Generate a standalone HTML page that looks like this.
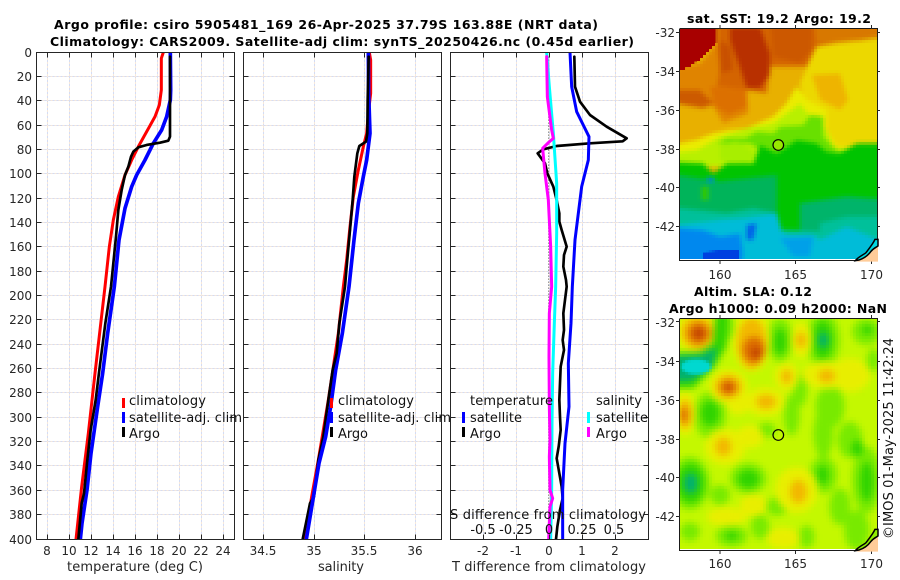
<!DOCTYPE html>
<html><head><meta charset="utf-8">
<style>
html,body{margin:0;padding:0;background:#fff}
svg{display:block}
text{font-family:"DejaVu Sans","Liberation Sans",sans-serif;font-size:12px;fill:#262626}
.t{font-weight:bold;fill:#000;font-size:12.5px}
.k{fill:#111}
.l{font-size:13px}
</style></head><body>
<svg width="900" height="580" viewBox="0 0 900 580" xmlns="http://www.w3.org/2000/svg">
<defs>
<filter id="pix" filterUnits="userSpaceOnUse" x="680" y="29" width="198" height="231" color-interpolation-filters="sRGB">
<feFlood x="680" y="29" width="1" height="1" flood-color="#000"/>
<feComposite x="680" y="29" width="3" height="3"/>
<feTile x="680" y="29" width="198" height="231" result="a"/>
<feComposite in="SourceGraphic" in2="a" operator="in"/>
<feMorphology operator="dilate" radius="1"/>
</filter>
<filter id="pix2" filterUnits="userSpaceOnUse" x="680" y="319" width="198" height="231" color-interpolation-filters="sRGB">
<feFlood x="680" y="319" width="1" height="1" flood-color="#000"/>
<feComposite x="680" y="319" width="3" height="3"/>
<feTile x="680" y="319" width="198" height="231" result="a"/>
<feComposite in="SourceGraphic" in2="a" operator="in"/>
<feMorphology operator="dilate" radius="1"/>
</filter>
<filter id="b" x="-20%" y="-20%" width="140%" height="140%" color-interpolation-filters="sRGB"><feGaussianBlur stdDeviation="10"/></filter>
<filter id="b1" x="-20%" y="-20%" width="140%" height="140%" color-interpolation-filters="sRGB"><feGaussianBlur stdDeviation="6"/></filter>
<filter id="b2" x="-20%" y="-20%" width="140%" height="140%" color-interpolation-filters="sRGB"><feGaussianBlur stdDeviation="4"/></filter>
<clipPath id="c1"><rect x="680" y="29" width="197" height="230"/></clipPath>
<clipPath id="c2"><rect x="680" y="319" width="197" height="230"/></clipPath>
<clipPath id="pc1"><rect x="37" y="52" width="197" height="487"/></clipPath>
<clipPath id="pc2"><rect x="244" y="52" width="197" height="487"/></clipPath>
<clipPath id="pc3"><rect x="451" y="52" width="197" height="487"/></clipPath>
<path id="hgrid" d="M0 76.5H198M0 100.5H198M0 125.5H198M0 149.5H198M0 173.5H198M0 198.5H198M0 222.5H198M0 246.5H198M0 271.5H198M0 295.5H198M0 319.5H198M0 344.5H198M0 368.5H198M0 392.5H198M0 417.5H198M0 441.5H198M0 465.5H198M0 490.5H198M0 514.5H198"/>
<path id="hticks" d="M0 76.5H5M0 100.5H5M0 125.5H5M0 149.5H5M0 173.5H5M0 198.5H5M0 222.5H5M0 246.5H5M0 271.5H5M0 295.5H5M0 319.5H5M0 344.5H5M0 368.5H5M0 392.5H5M0 417.5H5M0 441.5H5M0 465.5H5M0 490.5H5M0 514.5H5M198 76.5H193M198 100.5H193M198 125.5H193M198 149.5H193M198 173.5H193M198 198.5H193M198 222.5H193M198 246.5H193M198 271.5H193M198 295.5H193M198 319.5H193M198 344.5H193M198 368.5H193M198 392.5H193M198 417.5H193M198 441.5H193M198 465.5H193M198 490.5H193M198 514.5H193"/>
</defs>
<rect width="900" height="580" fill="#fff"/>

<text class="t" x="54" y="29" textLength="544" lengthAdjust="spacing">Argo profile: csiro 5905481_169 26-Apr-2025 37.79S 163.88E (NRT data)</text>
<text class="t" x="50" y="46" textLength="584" lengthAdjust="spacing">Climatology: CARS2009. Satellite-adj clim: synTS_20250426.nc (0.45d earlier)</text>

<!-- grids -->
<g fill="none" stroke-width="1">
<g stroke="#d4dcf4" stroke-dasharray="2 2">
<use href="#hgrid" x="36.5"/><use href="#hgrid" x="243.5"/><use href="#hgrid" x="450.5"/>
<path d="M47.500 52V539M69.500 52V539M91.500 52V539M113.500 52V539M135.500 52V539M157.500 52V539M179.500 52V539M201.500 52V539M223.500 52V539M263.500 52V539M314.500 52V539M364.500 52V539M415.500 52V539M483.500 52V539M516.500 52V539M549.500 52V539M582.500 52V539M615.500 52V539"/>
</g>
<g stroke="#f6e8da" stroke-dasharray="2 2" stroke-dashoffset="2">
<use href="#hgrid" x="36.500"/><use href="#hgrid" x="243.500"/><use href="#hgrid" x="450.500"/>
<path d="M47.500 52V539M69.500 52V539M91.500 52V539M113.500 52V539M135.500 52V539M157.500 52V539M179.500 52V539M201.500 52V539M223.500 52V539M263.500 52V539M314.500 52V539M364.500 52V539M415.500 52V539M483.500 52V539M516.500 52V539M549.500 52V539M582.500 52V539M615.500 52V539"/>
</g>
</g>

<!-- profile curves -->
<g fill="none" stroke-linejoin="round" stroke-linecap="round">
<g clip-path="url(#pc1)"><g transform="scale(.33333)">
<polyline stroke="#f00" stroke-width="9" points="490,157 484,175 484,270 478,315 465,350 440,395 415,440 395,480 375,525 355,590 340,660 328,740 315,860 300,990 285,1120 265,1300 245,1460 228,1618"/>
<polyline stroke="#00f" stroke-width="11" points="511,157 512,270 511,300 500,350 485,390 460,430 435,480 410,525 395,560 375,625 357,720 343,860 323,1000 308,1120 293,1220 273,1360 261,1470 246,1570 241,1618"/>
<polyline stroke="#000" stroke-width="8" points="510,170 510,410 505,422 480,428 440,435 415,442 400,455 393,470 385,500 375,525 365,570 355,630 348,710 342,770 333,860 316,970 298,1110 287,1200 272,1290 262,1380 252,1480 245,1510 235,1618"/>
</g></g>
<g clip-path="url(#pc2)"><g transform="scale(.33333)">
<polyline stroke="#f00" stroke-width="9" points="1108,157 1112,180 1112,280 1105,340 1100,400 1090,440 1075,510 1060,590 1050,680 1040,780 1030,860 1015,1000 1000,1100 985,1200 970,1290 955,1380 935,1490 915,1618"/>
<polyline stroke="#00f" stroke-width="11" points="1105,157 1106,280 1110,400 1100,480 1090,530 1075,610 1062,720 1047,860 1027,1000 1007,1110 992,1220"/>
<polyline stroke="#000" stroke-width="8" points="1106,170 1103,300 1102,400 1098,425 1078,438 1072,460 1063,530 1058,600 1050,690 1040,800 1035,860 1018,970 1010,1060 998,1110 985,1200 970,1310 955,1380 942,1490 930,1510 908,1618"/>
<polyline stroke="#00f" stroke-width="11" points="992,1220 977,1310 957,1390 937,1510 919,1618"/>
</g></g>
<g clip-path="url(#pc3)"><g transform="translate(440,0) scale(.33333)">
<path d="M326 170V1618" stroke="#444" stroke-width="3" stroke-dasharray="3 6" stroke-linecap="butt"/>
<polyline stroke="#000" stroke-width="8" points="403,170 405,260 420,305 450,345 500,380 560,415 548,424 450,430 350,438 310,448 293,460 315,490 322,520 340,560 350,600 358,640 358,665 365,690 380,740 372,765 370,800 378,840 380,860 375,900 370,940 372,990 368,1020 372,1050 362,1100 360,1150 358,1200 360,1250 362,1290 356,1340 350,1375 358,1420 365,1460 368,1495 360,1530 352,1580 348,1618"/>
<polyline stroke="#00f" stroke-width="9" points="390,157 395,260 410,335 447,410 445,480 425,560 405,720 397,860 393,970 385,1090 387,1220 375,1330 368,1470 368,1618"/>
<polyline stroke="#0ff" stroke-width="9" points="320,157 328,260 340,400 350,550 350,700 347,860 343,970 338,1120 336,1270 335,1470 332,1618"/>
<polyline stroke="#f0f" stroke-width="9" points="320,170 322,290 335,390 340,415 325,428 308,445 315,520 325,600 332,740 335,860 328,940 327,1070 328,1220 330,1320 328,1370 330,1470 338,1495 330,1520 326,1618"/>
</g></g>
</g>

<!-- axes boxes and ticks -->
<g fill="none" stroke="#262626" stroke-width="1">
<rect x="36.500" y="52.500" width="198" height="487"/>
<rect x="243.500" y="52.500" width="198" height="487"/>
<rect x="450.500" y="52.500" width="198" height="487"/>
<use href="#hticks" x="36.500"/><use href="#hticks" x="243.500"/><use href="#hticks" x="450.500"/>
<path d="M47.500 52.500v5M69.500 52.500v5M91.500 52.500v5M113.500 52.500v5M135.500 52.500v5M157.500 52.500v5M179.500 52.500v5M201.500 52.500v5M223.500 52.500v5M263.500 52.500v5M314.500 52.500v5M364.500 52.500v5M415.500 52.500v5M483.500 52.500v5M516.500 52.500v5M549.500 52.500v5M582.500 52.500v5M615.500 52.500v5M47.500 539.500v-5M69.500 539.500v-5M91.500 539.500v-5M113.500 539.500v-5M135.500 539.500v-5M157.500 539.500v-5M179.500 539.500v-5M201.500 539.500v-5M223.500 539.500v-5M263.500 539.500v-5M314.500 539.500v-5M364.500 539.500v-5M415.500 539.500v-5M483.500 539.500v-5M516.500 539.500v-5M549.500 539.500v-5M582.500 539.500v-5M615.500 539.500v-5"/>
</g>

<!-- depth labels -->
<g>
<text x="32" y="57" text-anchor="end">0</text>
<text x="32" y="81" text-anchor="end">20</text>
<text x="32" y="105" text-anchor="end">40</text>
<text x="32" y="130" text-anchor="end">60</text>
<text x="32" y="154" text-anchor="end">80</text>
<text x="32" y="178" text-anchor="end">100</text>
<text x="32" y="203" text-anchor="end">120</text>
<text x="32" y="227" text-anchor="end">140</text>
<text x="32" y="251" text-anchor="end">160</text>
<text x="32" y="276" text-anchor="end">180</text>
<text x="32" y="300" text-anchor="end">200</text>
<text x="32" y="324" text-anchor="end">220</text>
<text x="32" y="349" text-anchor="end">240</text>
<text x="32" y="373" text-anchor="end">260</text>
<text x="32" y="397" text-anchor="end">280</text>
<text x="32" y="422" text-anchor="end">300</text>
<text x="32" y="446" text-anchor="end">320</text>
<text x="32" y="470" text-anchor="end">340</text>
<text x="32" y="495" text-anchor="end">360</text>
<text x="32" y="519" text-anchor="end">380</text>
<text x="32" y="544" text-anchor="end">400</text>
</g>

<!-- x labels -->
<g text-anchor="middle">
<text x="47" y="555">8</text><text x="69" y="555">10</text><text x="91" y="555">12</text><text x="113" y="555">14</text><text x="135" y="555">16</text><text x="157" y="555">18</text><text x="179" y="555">20</text><text x="201" y="555">22</text><text x="223" y="555">24</text>
<text x="263" y="555">34.5</text><text x="314" y="555">35</text><text x="364" y="555">35.5</text><text x="415" y="555">36</text>
<text x="483" y="555">-2</text><text x="516" y="555">-1</text><text x="549" y="555">0</text><text x="582" y="555">1</text><text x="615" y="555">2</text>
<text x="483" y="534" class="k l">-0.5</text><text x="516" y="534" class="k l">-0.25</text><text x="549" y="534" class="k l">0</text><text x="582" y="534" class="k l">0.25</text><text x="614" y="534" class="k l">0.5</text>
</g>
<text class="l" x="67" y="571" textLength="136" lengthAdjust="spacing">temperature (deg C)</text>
<text class="l" x="318" y="571" textLength="46" lengthAdjust="spacing">salinity</text>
<text class="l" x="452" y="571" textLength="194" lengthAdjust="spacing">T difference from climatology</text>
<text x="450" y="519" textLength="196" lengthAdjust="spacing" class="k l">S difference from climatology</text>

<!-- legends -->
<g>
<rect x="122" y="398" width="3" height="10" fill="#f00"/><rect x="122" y="412" width="3" height="11" fill="#00f"/><rect x="122" y="427" width="3" height="10" fill="#000"/>
<text class="k l" x="129" y="405" textLength="77" lengthAdjust="spacing">climatology</text>
<text class="k l" x="129" y="422" textLength="113" lengthAdjust="spacing">satellite-adj. clim</text>
<text class="k l" x="129" y="438" textLength="31" lengthAdjust="spacing">Argo</text>
<rect x="330" y="398" width="3" height="10" fill="#f00"/><rect x="330" y="412" width="3" height="11" fill="#00f"/><rect x="330" y="427" width="3" height="10" fill="#000"/>
<text class="k l" x="338" y="405" textLength="76" lengthAdjust="spacing">climatology</text>
<text class="k l" x="338" y="422" textLength="113" lengthAdjust="spacing">satellite-adj. clim</text>
<text class="k l" x="338" y="438" textLength="30" lengthAdjust="spacing">Argo</text>
<rect x="462" y="412" width="3" height="11" fill="#00f"/><rect x="462" y="427" width="3" height="10" fill="#000"/>
<text class="k l" x="470" y="405" textLength="83" lengthAdjust="spacing">temperature</text>
<text class="k l" x="470" y="422" textLength="52" lengthAdjust="spacing">satellite</text>
<text class="k l" x="470" y="438" textLength="31" lengthAdjust="spacing">Argo</text>
<rect x="587" y="412" width="3" height="11" fill="#0ff"/><rect x="587" y="427" width="3" height="10" fill="#f0f"/>
<text class="k l" x="596" y="405" textLength="46" lengthAdjust="spacing">salinity</text>
<text class="k l" x="596" y="422" textLength="52" lengthAdjust="spacing">satellite</text>
<text class="k l" x="596" y="438" textLength="31" lengthAdjust="spacing">Argo</text>
</g>

<!-- MAP 1 -->
<text class="t" x="687" y="23" textLength="184" lengthAdjust="spacing">sat. SST: 19.2 Argo: 19.2</text>
<g clip-path="url(#c1)"><g filter="url(#pix)"><g transform="translate(660,0) scale(.33333)">
<rect x="20" y="50" width="670" height="770" fill="#e8b000"/>
<g filter="url(#b1)">
<polygon points="170,50 680,50 680,130 560,120 470,140 440,200 330,200 320,280 260,270 170,260" fill="#d46400"/>
<polygon points="20,210 120,190 170,130 180,210 170,260 260,270 265,340 190,370 160,320 20,300" fill="#e08400"/>
<polygon points="470,140 680,110 680,440 480,440 430,300 420,250" fill="#ecd800"/>
<polygon points="455,225 540,220 565,300 540,330 480,300" fill="#eeb400"/>
<polygon points="330,50 460,50 455,150 420,190 340,170" fill="#cc5800"/>
<polygon points="460,50 680,50 680,108 560,125 470,130" fill="#d87800"/>
<polygon points="210,80 300,80 330,160 330,225 300,265 260,265 235,190 210,120" fill="#b83000"/>
<polygon points="20,270 120,270 160,310 130,325 20,305" fill="#cc5a00"/>
<polygon points="180,120 210,140 220,210 180,220" fill="#c85000"/>
<polygon points="150,260 260,270 262,320 205,345 165,320" fill="#dc7000"/>
<polygon points="20,440 110,420 160,400 210,390 260,385 340,350 380,310 410,260 440,300 500,330 500,390 530,440 680,440 680,500 20,500" fill="#eaec00"/>
<polygon points="20,460 110,450 180,410 260,385 340,370 380,340 420,310 450,350 500,390 520,440 680,480 680,500 20,500" fill="#b8f000"/>
<polygon points="170,430 200,415 255,415 290,395 340,400 360,380 430,375 450,345 490,350 490,410 530,450 560,470 330,480 300,450 270,430" fill="#68e000"/>
<polygon points="180,435 230,425 275,450 285,470 260,490 180,480" fill="#a8ee00"/>
<polygon points="20,485 130,490 160,520 200,490 280,490 300,435 350,460 410,420 470,430 500,455 535,460 590,430 680,430 680,820 20,820" fill="#00c400"/>
<polygon points="20,520 180,545 350,525 350,650 20,660" fill="#00b45a"/>
<polygon points="420,610 560,590 680,600 680,680 420,700" fill="#00b46a"/>
<polygon points="125,560 145,560 145,600 125,600" fill="#30c800"/>
<polygon points="20,620 200,640 280,625 350,640 360,690 480,695 480,670 560,650 680,650 680,820 20,820" fill="#00c09a"/>
<polygon points="180,660 250,655 350,640 365,695 380,705 460,705 480,720 560,680 680,730 680,820 20,820 20,680" fill="#00bcd8"/>
<polygon points="20,680 130,690 180,710 240,700 250,760 240,820 20,820" fill="#0088ee"/>
<polygon points="260,675 290,670 280,720 260,720" fill="#0060e8"/>
<polygon points="360,715 460,710 450,770 400,770" fill="#00a0e8"/>
<rect x="142" y="533" width="20" height="12" fill="#0080f0"/>
</g>
<polygon points="130,755 240,750 240,820 130,820" fill="#0040e0"/>
<polygon points="20,50 170,50 170,130 120,180 70,210 20,210" fill="#a80000"/>
</g></g></g>
<ellipse cx="778.300" cy="145" rx="5.300" ry="5.600" fill="#98e800"/>
<circle cx="778.300" cy="145" r="5.300" fill="none" stroke="#000" stroke-width="1.200"/>

<path d="M679.500 29V261M679.500 260.500H878M877.500 29V261M679.500 28.500H878" fill="none" stroke="#1a1a1a" stroke-width="1"/>
<path d="M676 32.500h4M676 71.500h4M676 110.500h4M676 149.500h4M676 187.500h4M676 226.500h4M877 32.500h3M877 71.500h3M877 110.500h3M877 149.500h3M877 187.500h3M877 226.500h3M720 25v4M795.500 25v4M871.500 25v4M720 261v3M795.500 261v3M871.500 261v3" fill="none" stroke="#262626"/>
<g transform="translate(660,0) scale(.33333)">
<polygon points="595,782 625,765 645,745 654,738 654,785 590,785" fill="#ffcc99"/>
<path d="M597,780 C615,774 625,765 632,755 C640,745 648,742 654,738 L654,718 L645,718 C640,730 628,745 618,758 C610,765 595,770 586,782Z" fill="#00d8e0" stroke="#000" stroke-width="4.500"/>
</g>
<g>
<text x="675" y="37" text-anchor="end">-32</text><text x="675" y="76" text-anchor="end">-34</text><text x="675" y="115" text-anchor="end">-36</text><text x="675" y="154" text-anchor="end">-38</text><text x="675" y="192" text-anchor="end">-40</text><text x="675" y="231" text-anchor="end">-42</text>
</g>
<text text-anchor="middle" x="720" y="279">160</text><text text-anchor="middle" x="795.500" y="279">165</text><text text-anchor="middle" x="871.500" y="279">170</text>

<!-- MAP 2 -->
<text class="t" x="694" y="296" textLength="118" lengthAdjust="spacing">Altim. SLA: 0.12</text>
<text class="t" x="669" y="313" textLength="218" lengthAdjust="spacing">Argo h1000: 0.09 h2000: NaN</text>
<g clip-path="url(#c2)"><g filter="url(#pix2)"><g transform="translate(660,290) scale(.33333)">
<rect x="20" y="50" width="670" height="770" fill="#c4f800"/>
<g filter="url(#b)">
<g fill="#78ea00">
<ellipse cx="190" cy="110" rx="34" ry="45"/><ellipse cx="360" cy="150" rx="38" ry="66"/><ellipse cx="490" cy="150" rx="50" ry="85"/><ellipse cx="620" cy="125" rx="44" ry="40"/><ellipse cx="640" cy="210" rx="20" ry="34"/>
<ellipse cx="150" cy="375" rx="48" ry="70"/><ellipse cx="420" cy="300" rx="22" ry="50"/><ellipse cx="395" cy="375" rx="24" ry="62"/><ellipse cx="510" cy="350" rx="44" ry="65"/><ellipse cx="490" cy="430" rx="30" ry="75"/>
<ellipse cx="320" cy="420" rx="28" ry="22"/><ellipse cx="570" cy="450" rx="38" ry="55"/><ellipse cx="620" cy="570" rx="44" ry="100"/><ellipse cx="490" cy="555" rx="42" ry="55"/><ellipse cx="265" cy="565" rx="55" ry="46"/>
<ellipse cx="90" cy="580" rx="60" ry="80"/><ellipse cx="180" cy="615" rx="30" ry="30"/><ellipse cx="350" cy="650" rx="32" ry="28"/><ellipse cx="215" cy="738" rx="48" ry="32"/><ellipse cx="300" cy="710" rx="28" ry="38"/>
<ellipse cx="90" cy="725" rx="30" ry="28"/><ellipse cx="590" cy="720" rx="38" ry="60"/><ellipse cx="440" cy="740" rx="24" ry="34"/><ellipse cx="540" cy="650" rx="32" ry="55"/>
</g>
<g fill="#e8ee00">
<ellipse cx="115" cy="125" rx="66" ry="64"/><ellipse cx="275" cy="150" rx="56" ry="95"/><ellipse cx="425" cy="150" rx="32" ry="52"/><ellipse cx="380" cy="260" rx="36" ry="42"/><ellipse cx="500" cy="255" rx="74" ry="42"/>
<ellipse cx="205" cy="290" rx="58" ry="52"/><ellipse cx="315" cy="335" rx="62" ry="42"/><ellipse cx="235" cy="340" rx="34" ry="34"/><ellipse cx="75" cy="370" rx="32" ry="66"/><ellipse cx="195" cy="470" rx="60" ry="55"/>
<ellipse cx="270" cy="440" rx="40" ry="34"/><ellipse cx="410" cy="600" rx="64" ry="68"/><ellipse cx="200" cy="680" rx="60" ry="28"/><ellipse cx="370" cy="745" rx="50" ry="32"/><ellipse cx="280" cy="645" rx="40" ry="34"/><ellipse cx="570" cy="255" rx="60" ry="50"/>
</g>
<g fill="#f2b800">
<ellipse cx="112" cy="128" rx="48" ry="48"/><ellipse cx="275" cy="160" rx="44" ry="76"/><ellipse cx="423" cy="150" rx="16" ry="24"/><ellipse cx="380" cy="260" rx="16" ry="22"/><ellipse cx="500" cy="258" rx="26" ry="20"/>
<ellipse cx="205" cy="290" rx="40" ry="36"/><ellipse cx="318" cy="335" rx="30" ry="22"/><ellipse cx="75" cy="372" rx="22" ry="44"/><ellipse cx="190" cy="470" rx="24" ry="28"/><ellipse cx="415" cy="605" rx="26" ry="36"/>
</g>
<g fill="#dc6c00">
<ellipse cx="115" cy="130" rx="32" ry="32"/><ellipse cx="282" cy="180" rx="34" ry="40"/><ellipse cx="205" cy="292" rx="25" ry="22"/><ellipse cx="72" cy="375" rx="11" ry="24"/>
</g>
<g fill="#c04000"><ellipse cx="116" cy="130" rx="16" ry="16"/><ellipse cx="288" cy="188" rx="14" ry="16"/><ellipse cx="205" cy="292" rx="10" ry="8"/></g>
<g fill="#30d400">
<ellipse cx="360" cy="155" rx="20" ry="40"/><ellipse cx="488" cy="150" rx="30" ry="58"/><ellipse cx="150" cy="370" rx="28" ry="38"/><ellipse cx="265" cy="567" rx="32" ry="28"/><ellipse cx="488" cy="555" rx="18" ry="30"/>
<ellipse cx="620" cy="575" rx="20" ry="60"/><ellipse cx="592" cy="475" rx="18" ry="25"/><ellipse cx="215" cy="738" rx="20" ry="12"/><ellipse cx="622" cy="120" rx="16" ry="14"/>
<ellipse cx="92" cy="580" rx="42" ry="60"/>
<polygon points="168,50 205,50 200,170 165,230 100,295 20,295 20,190 120,185 158,160"/>
</g>
<g fill="#00b070"><ellipse cx="490" cy="150" rx="14" ry="24"/><ellipse cx="92" cy="580" rx="20" ry="30"/><polygon points="20,200 125,195 172,170 155,228 95,272 20,275"/></g>
</g>
<g filter="url(#b2)"><ellipse cx="108" cy="230" rx="44" ry="22" fill="#00d8d0"/></g>
</g></g></g>
<circle cx="778.300" cy="435" r="5.300" fill="none" stroke="#000" stroke-width="1.200"/>

<path d="M679.500 319V551M679.500 550.500H878M877.500 319V551M679.500 318.500H878" fill="none" stroke="#1a1a1a" stroke-width="1"/>
<path d="M676 321.500h4M676 361.500h4M676 400.500h4M676 439.500h4M676 477.500h4M676 516.500h4M877 321.500h3M877 361.500h3M877 400.500h3M877 439.500h3M877 477.500h3M877 516.500h3M720 315v4M795.500 315v4M871.500 315v4M720 551v3M795.500 551v3M871.500 551v3" fill="none" stroke="#262626"/>
<g transform="translate(660,290) scale(.33333)">
<polygon points="595,782 625,765 645,745 654,738 654,785 590,785" fill="#ffcc99"/>
<path d="M597,780 C615,774 625,765 632,755 C640,745 648,742 654,738 L654,718 L645,718 C640,730 628,745 618,758 C610,765 595,770 586,782Z" fill="#90ec00" stroke="#000" stroke-width="4.500"/>
</g>
<g>
<text x="675" y="327" text-anchor="end">-32</text><text x="675" y="366" text-anchor="end">-34</text><text x="675" y="405" text-anchor="end">-36</text><text x="675" y="444" text-anchor="end">-38</text><text x="675" y="482" text-anchor="end">-40</text><text x="675" y="521" text-anchor="end">-42</text>
</g>
<text text-anchor="middle" x="720" y="568">160</text><text text-anchor="middle" x="795.500" y="568">165</text><text text-anchor="middle" x="871.500" y="568">170</text>

<text class="k l" transform="translate(893,539) rotate(-90)" textLength="201" lengthAdjust="spacing">©IMOS 01-May-2025 11:42:24</text>
</svg>
</body></html>
